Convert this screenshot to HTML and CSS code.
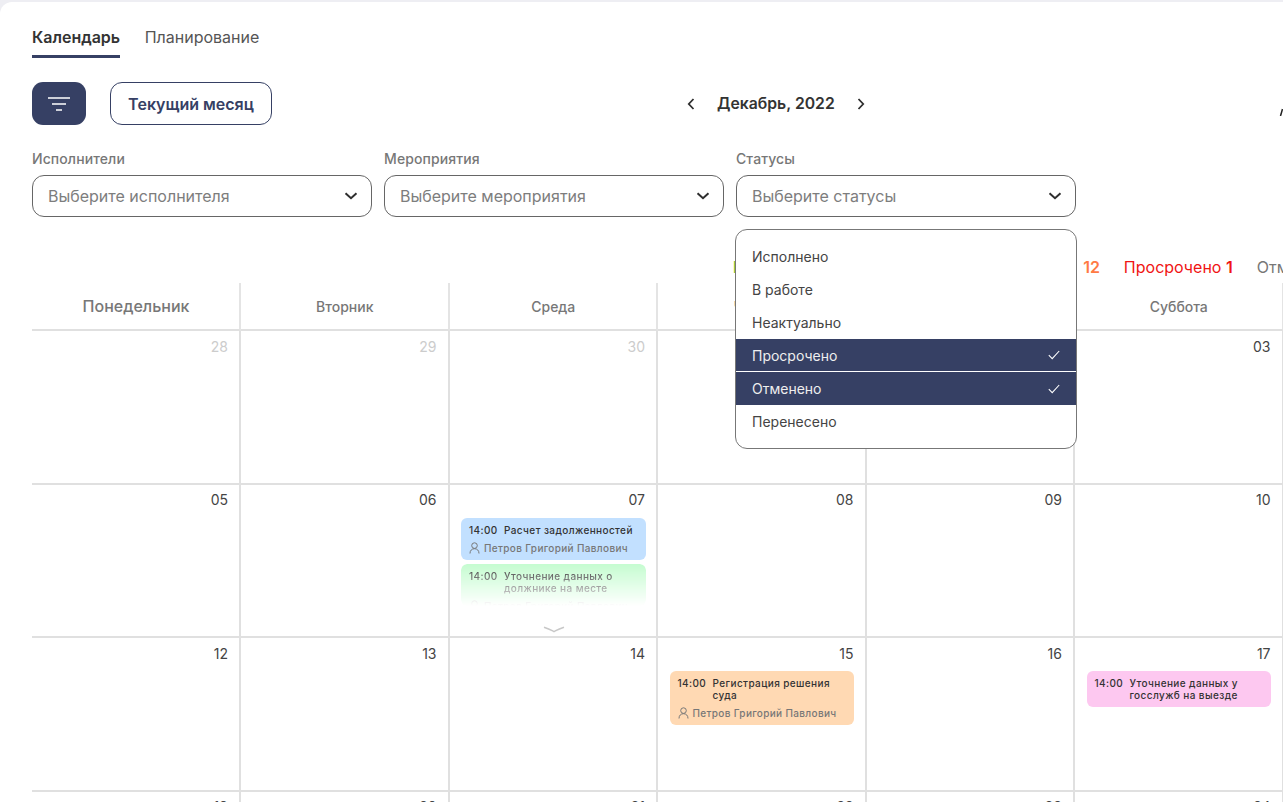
FILE: index.html
```html
<!DOCTYPE html>
<html lang="ru">
<head>
<meta charset="utf-8">
<title>Календарь</title>
<link rel="stylesheet" href="styles.css">
</head>
<body>
<main class="card">
  <nav class="tabs">
    <a class="tab tab-active">Календарь</a>
    <a class="tab">Планирование</a>
  </nav>
  <div class="toolbar">
    <button class="filter-btn" aria-label="Фильтр">
      <svg width="22" height="14" viewBox="0 0 22 14"><path d="M0 1h22M4 7h14M8 13h6" stroke="#fff" stroke-width="1.6" fill="none"/></svg>
    </button>
    <button class="month-btn">Текущий месяц</button>
    <div class="month-nav">
      <svg width="10" height="14" viewBox="0 0 10 14"><path d="M7.500 2 2.800 7l4.700 5" stroke="#2f2f2f" stroke-width="1.800" fill="none"/></svg>
      <span class="month-label">Декабрь, 2022</span>
      <svg width="10" height="14" viewBox="0 0 10 14"><path d="M2.500 2l4.700 5-4.700 5" stroke="#2f2f2f" stroke-width="1.800" fill="none"/></svg>
    </div>
    <svg class="edge-mark" width="6" height="8" viewBox="0 0 6 8"><path d="M3.500 8 5.500 1" stroke="#222" stroke-width="1.500" fill="none"/></svg>
  </div>
  <div class="filters">
    <div class="field">
      <label class="field-label">Исполнители</label>
      <div class="select"><span>Выберите исполнителя</span><svg width="14" height="8" viewBox="0 0 14 8"><path d="M1.500 1.200 7 6.200l5.500-5" stroke="#2f2f2f" stroke-width="2" fill="none"/></svg></div>
    </div>
    <div class="field">
      <label class="field-label">Мероприятия</label>
      <div class="select"><span>Выберите мероприятия</span><svg width="14" height="8" viewBox="0 0 14 8"><path d="M1.500 1.200 7 6.200l5.500-5" stroke="#2f2f2f" stroke-width="2" fill="none"/></svg></div>
    </div>
    <div class="field">
      <label class="field-label">Статусы</label>
      <div class="select"><span>Выберите статусы</span><svg width="14" height="8" viewBox="0 0 14 8"><path d="M1.500 1.200 7 6.200l5.500-5" stroke="#2f2f2f" stroke-width="2" fill="none"/></svg></div>
      <ul class="menu">
        <li class="menu-item">Исполнено</li>
        <li class="menu-item">В работе</li>
        <li class="menu-item">Неактуально</li>
        <li class="menu-item menu-selected">Просрочено<svg width="12" height="10" viewBox="0 0 12 10"><path d="M.8 5.200 4.200 8.600 11.200 1" stroke="#fff" stroke-width="1.100" fill="none"/></svg></li>
        <li class="menu-item menu-selected">Отменено<svg width="12" height="10" viewBox="0 0 12 10"><path d="M.8 5.200 4.200 8.600 11.200 1" stroke="#fff" stroke-width="1.100" fill="none"/></svg></li>
        <li class="menu-item">Перенесено</li>
      </ul>
    </div>
  </div>
  <div class="legend">
    <span class="legend-done">Исполнено <b>18</b></span>
    <span class="legend-work">В работе <b>15</b></span>
    <span class="legend-idle">Неактуально <b>12</b></span>
    <span class="legend-late">Просрочено <b>1</b></span>
    <span class="legend-cancel">Отменено <b>3</b></span>
  </div>
  <section class="calendar">
    <div class="head head-first">Понедельник</div>
    <div class="head">Вторник</div>
    <div class="head">Среда</div>
    <div class="head">Четверг</div>
    <div class="head">Пятница</div>
    <div class="head">Суббота</div>
    <div class="head">Воскресенье</div>

    <div class="day day-muted"><span class="num">28</span></div>
    <div class="day day-muted"><span class="num">29</span></div>
    <div class="day day-muted"><span class="num">30</span></div>
    <div class="day"><span class="num">01</span></div>
    <div class="day"><span class="num">02</span></div>
    <div class="day"><span class="num">03</span></div>
    <div class="day"><span class="num">04</span></div>

    <div class="day"><span class="num">05</span></div>
    <div class="day"><span class="num">06</span></div>
    <div class="day">
      <span class="num">07</span>
      <article class="event event-blue">
        <div class="event-main"><span class="event-time">14:00</span><span class="event-title">Расчет задолженностей</span></div>
        <div class="event-person"><svg width="11" height="12" viewBox="0 0 11 12"><circle cx="5.500" cy="3.600" r="2.800" stroke="#777" fill="none"/><path d="M1 11.500c0-3 1.800-4.800 4.500-4.800s4.500 1.800 4.500 4.800" stroke="#777" fill="none"/></svg>Петров Григорий Павлович</div>
      </article>
      <article class="event event-green">
        <div class="event-main"><span class="event-time">14:00</span><span class="event-title">Уточнение данных о должнике на месте</span></div>
        <div class="event-person"><svg width="11" height="12" viewBox="0 0 11 12"><circle cx="5.500" cy="3.600" r="2.800" stroke="#777" fill="none"/><path d="M1 11.500c0-3 1.800-4.800 4.500-4.800s4.500 1.800 4.500 4.800" stroke="#777" fill="none"/></svg>Петров Григорий Павлович</div>
      </article>
      <svg class="more" width="22" height="7" viewBox="0 0 22 7"><path d="M1 1.200c6 2 8 3.400 10 4.400 2-1 4-2.400 10-4.400" stroke="#c8c8c8" stroke-width="1.500" fill="none"/></svg>
    </div>
    <div class="day"><span class="num">08</span></div>
    <div class="day"><span class="num">09</span></div>
    <div class="day"><span class="num">10</span></div>
    <div class="day"><span class="num">11</span></div>

    <div class="day"><span class="num">12</span></div>
    <div class="day"><span class="num">13</span></div>
    <div class="day"><span class="num">14</span></div>
    <div class="day">
      <span class="num">15</span>
      <article class="event event-orange">
        <div class="event-main"><span class="event-time">14:00</span><span class="event-title">Регистрация решения суда</span></div>
        <div class="event-person"><svg width="11" height="12" viewBox="0 0 11 12"><circle cx="5.500" cy="3.600" r="2.800" stroke="#777" fill="none"/><path d="M1 11.500c0-3 1.800-4.800 4.500-4.800s4.500 1.800 4.500 4.800" stroke="#777" fill="none"/></svg>Петров Григорий Павлович</div>
      </article>
    </div>
    <div class="day"><span class="num">16</span></div>
    <div class="day">
      <span class="num">17</span>
      <article class="event event-pink">
        <div class="event-main"><span class="event-time">14:00</span><span class="event-title">Уточнение данных у госслужб на выезде</span></div>
      </article>
    </div>
    <div class="day"><span class="num">18</span></div>

    <div class="day"><span class="num">19</span></div>
    <div class="day"><span class="num">20</span></div>
    <div class="day"><span class="num">21</span></div>
    <div class="day"><span class="num">22</span></div>
    <div class="day"><span class="num">23</span></div>
    <div class="day"><span class="num">24</span></div>
    <div class="day"><span class="num">25</span></div>
  </section>
</main>
</body>
</html>
```

FILE: styles.css
```css
* { box-sizing: border-box; }
html, body { margin: 0; height: 802px; overflow: hidden; background: #eeeef3; }
body { font-family: Inter, "Liberation Sans", sans-serif; color: #333; }

.card {
  margin-top: 2px;
  width: 1283px;
  height: 800px;
  padding: 25px 0 0 32px;
  background: #fff;
  border-top-left-radius: 12px;
  overflow: hidden;
}

.tabs { display: flex; gap: 24.5px; height: 31px; }
.tab { font-size: 16px; line-height: 20px; color: #555; }
.tab-active { font-weight: 600; color: #333; border-bottom: 3px solid #364064; height: 31px; }

.toolbar { display: flex; align-items: center; height: 43px; margin-top: 24px; }
.filter-btn {
  width: 54px; height: 43px; border: 0; border-radius: 11px; background: #364064;
  display: flex; align-items: center; justify-content: center; padding: 0;
}
.month-btn {
  width: 162px; height: 43px; margin-left: 24px; border: 1px solid #364064; border-radius: 12px;
  background: #fff; color: #364064; font: 600 16px Inter, sans-serif; padding: 0;
}
.month-nav { display: flex; align-items: center; gap: 21px; margin-left: 414px; }
.month-label { font-size: 15.75px; font-weight: 600; color: #333; }
.edge-mark { margin-left: auto; margin-top: 16px; flex: none; }

.filters { display: flex; gap: 12px; margin-top: 26px; }
.field { position: relative; width: 340px; }
.field-label { display: block; font-size: 14px; line-height: 16px; font-weight: 500; color: #777; margin-bottom: 8px; letter-spacing: 0.1px; }
.select {
  height: 42px; border: 1px solid #666; border-radius: 12px; padding: 0 13px 0 15px;
  display: flex; align-items: center; justify-content: space-between;
  font-size: 16px; color: #7d7d7d; background: #fff;
}
.menu {
  position: absolute; z-index: 5; left: -1px; top: 78px; width: 342px; height: 220px;
  margin: 0; padding: 10px 0 0; list-style: none; background: #fff;
  border: 1px solid #777; border-radius: 12px; overflow: hidden;
}
.menu-item {
  height: 33px; padding: 0 16px; display: flex; align-items: center; justify-content: space-between;
  font-size: 14px; color: #444;
}
.menu-selected { background: #364064; color: #eee; border-bottom: 1px solid #fff; }
.menu-selected + .menu-selected { border-bottom: 0; }

.legend {
  display: flex; gap: 24px; white-space: nowrap; font-size: 16px; line-height: 18px;
  margin: 41px 0 0 701px; height: 16px;
}
.legend b { font-weight: 600; }
.legend-done { color: #7cc83c; font-weight: 700; }
.legend-work { color: #3a86e0; margin-left: -10px; }
.legend-idle { color: #ff7a45; }
.legend-idle b { margin-left: 4px; }
.legend-late { color: #f01414; }
.legend-cancel { color: #777; }

.calendar {
  display: grid; margin-top: 9px; width: 1460px;
  grid-template-columns: 209px repeat(6, 208.5px);
  grid-template-rows: 48px repeat(4, 153.67px);
}
.head {
  padding-left: 1px;
  border-right: 2px solid #e4e4e4; border-bottom: 2px solid #e0e0e0;
  display: flex; align-items: center; justify-content: center;
  font-size: 14px; font-weight: 500; color: #777;
}
.head-first { font-size: 16px; }
.day {
  position: relative; padding: 0 12px 0 11.5px; border-right: 2px solid #e0e0e0; border-bottom: 2px solid #e0e0e0;
  display: flex; flex-direction: column;
}
.num { display: block; height: 33px; padding-top: 6.5px; margin-right: -1px; text-align: right; font-size: 14px; line-height: 17px; color: #444; }
.day-muted .num { color: #ccc; }

.event { width: 184.5px; margin-bottom: 4px; padding: 6px 8px; border-radius: 6px; font-size: 10px; line-height: 12px; color: #333; }
.event-main { display: grid; grid-template-columns: 29px 1fr; column-gap: 6px; font-weight: 500; letter-spacing: 0.4px; }
.event-time { font-weight: 500; }
.event-person { display: flex; align-items: center; gap: 4px; margin-top: 6px; color: #777; font-weight: 500; letter-spacing: 0.35px; }
.event-blue { background: #c2e0ff; }
.event-green { background: #c5fcd0; height: 42px; overflow: hidden; -webkit-mask-image: linear-gradient(#000, transparent); mask-image: linear-gradient(#000, transparent); }
.event-orange { background: #ffd9b3; }
.event-pink { background: #fdc8f0; }
.more { position: absolute; left: 93px; bottom: 3px; }
```
